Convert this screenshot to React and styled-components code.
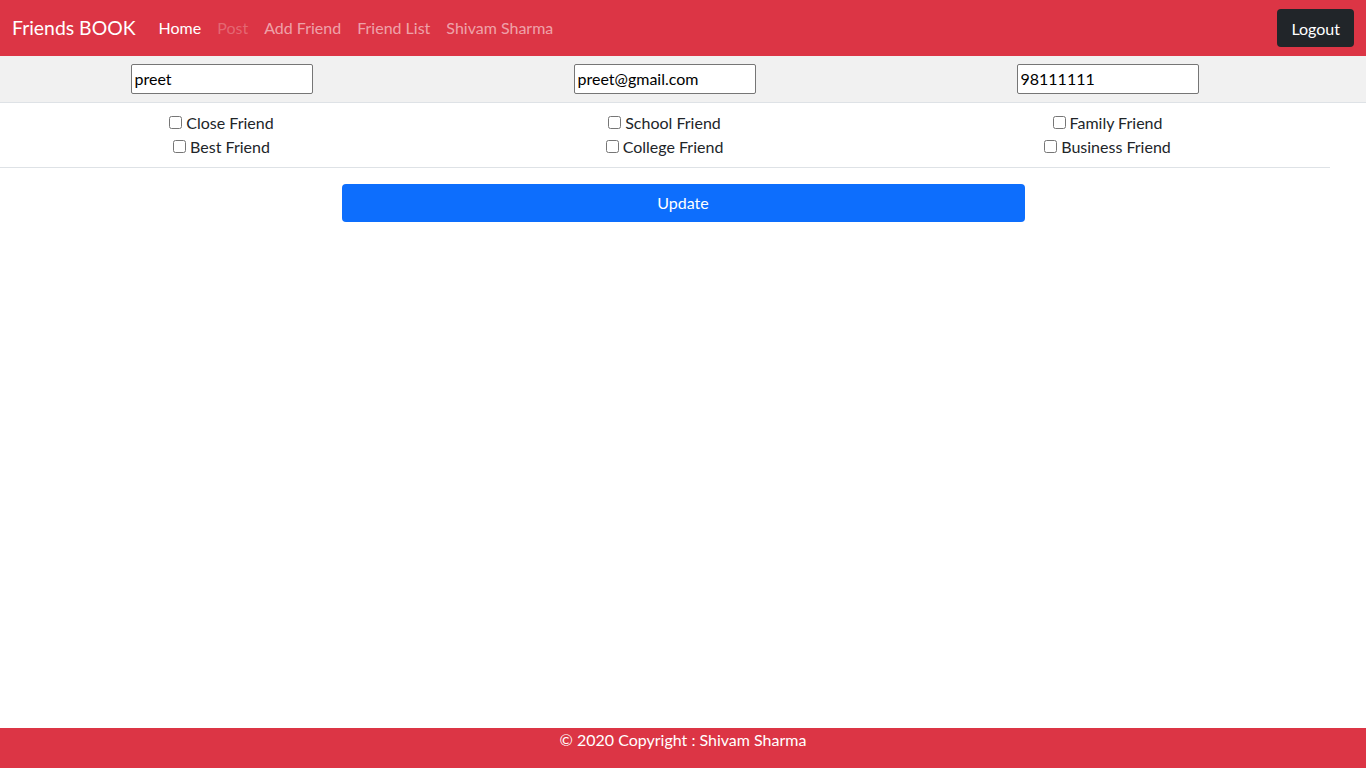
import React, { useState } from 'react';
import styled, { createGlobalStyle } from 'styled-components';

const GlobalStyle = createGlobalStyle`
  * { box-sizing: border-box; }
  body {
    margin: 0;
    font-family: "Segoe UI", Lato, "Noto Sans", sans-serif;
    font-size: 16px;
    line-height: 1.5;
    color: #212529;
    background: #fff;
  }
`;

const ScPage = styled.div`
  display: flex;
  flex-direction: column;
  min-height: 100vh;
`;

const ScNavbar = styled.nav`
  display: flex;
  align-items: center;
  justify-content: space-between;
  height: 56px;
  padding: 0 12px;
  background: #dc3545;
`;

const ScNavLeft = styled.div`
  display: flex;
  align-items: center;
`;

const ScBrand = styled.a`
  margin-right: 15px;
  font-size: 19.4px;
  color: #fff;
  text-decoration: none;
`;

const ScNavLink = styled.a`
  padding: 8px;
  font-size: 16px;
  text-decoration: none;
  color: ${(p) => (p.$active ? '#fff' : p.$disabled ? 'rgba(255,255,255,0.25)' : 'rgba(255,255,255,0.55)')};
`;

const ScLogout = styled.button`
  height: 38px;
  padding: 0 14px;
  border: 0;
  border-radius: 4px;
  background: #212529;
  color: #fff;
  font-family: inherit;
  font-size: 16px;
`;

const ScMain = styled.main`
  flex: 1;
`;

const ScInputRow = styled.div`
  display: grid;
  grid-template-columns: repeat(3, 443px);
  align-items: center;
  height: 47px;
  background: #f1f1f1;
  border-bottom: 1px solid #dee2e6;
`;

const ScCell = styled.div`
  display: flex;
  flex-direction: column;
  align-items: center;
`;

const ScInput = styled.input`
  width: 182px;
  height: 30px;
  padding: 0 3px 2px;
  border: 1px solid #767676;
  border-radius: 2px;
  background: #fff;
  font-family: inherit;
  font-size: 16px;
  color: #000;
  outline: none;
`;

const ScCheckRow = styled.div`
  display: grid;
  grid-template-columns: repeat(3, 443px);
  width: 1330px;
  padding: 8px 0;
  border-bottom: 1px solid #dee2e6;
`;

const ScCheckLabel = styled.label`
  display: flex;
  align-items: center;
  gap: 4px;
  height: 24px;
  font-size: 16px;

  input {
    width: 13px;
    height: 13px;
    margin: 0 0 1px;
  }
`;

const ScActions = styled.div`
  display: flex;
  justify-content: center;
  padding-top: 16px;
`;

const ScUpdate = styled.button`
  width: 683px;
  height: 38px;
  padding: 0 0 2px;
  border: 0;
  border-radius: 4px;
  background: #0d6efd;
  color: #fff;
  font-family: inherit;
  font-size: 16px;
`;

const ScFooter = styled.footer`
  height: 40px;
  background: #dc3545;
  color: #fff;
  text-align: center;
  font-size: 16px;
  line-height: 24px;
`;

const groups = [
  ['Close Friend', 'Best Friend'],
  ['School Friend', 'College Friend'],
  ['Family Friend', 'Business Friend'],
];

const App = () => {
  const [name, setName] = useState('preet');
  const [email, setEmail] = useState('preet@gmail.com');
  const [phone, setPhone] = useState('98111111');

  return (
    <ScPage>
      <GlobalStyle />
      <ScNavbar>
        <ScNavLeft>
          <ScBrand href="#">Friends BOOK</ScBrand>
          <ScNavLink href="#" $active>Home</ScNavLink>
          <ScNavLink href="#" $disabled>Post</ScNavLink>
          <ScNavLink href="#">Add Friend</ScNavLink>
          <ScNavLink href="#">Friend List</ScNavLink>
          <ScNavLink href="#">Shivam Sharma</ScNavLink>
        </ScNavLeft>
        <ScLogout type="button">Logout</ScLogout>
      </ScNavbar>

      <ScMain>
        <ScInputRow>
          <ScCell><ScInput value={name} onChange={(e) => setName(e.target.value)} /></ScCell>
          <ScCell><ScInput value={email} onChange={(e) => setEmail(e.target.value)} /></ScCell>
          <ScCell><ScInput value={phone} onChange={(e) => setPhone(e.target.value)} /></ScCell>
        </ScInputRow>

        <ScCheckRow>
          {groups.map((g) => (
            <ScCell key={g[0]}>
              {g.map((label) => (
                <ScCheckLabel key={label}>
                  <input type="checkbox" />
                  {label}
                </ScCheckLabel>
              ))}
            </ScCell>
          ))}
        </ScCheckRow>

        <ScActions>
          <ScUpdate type="button">Update</ScUpdate>
        </ScActions>
      </ScMain>

      <ScFooter>© 2020 Copyright : Shivam Sharma</ScFooter>
    </ScPage>
  );
};

export default App;
